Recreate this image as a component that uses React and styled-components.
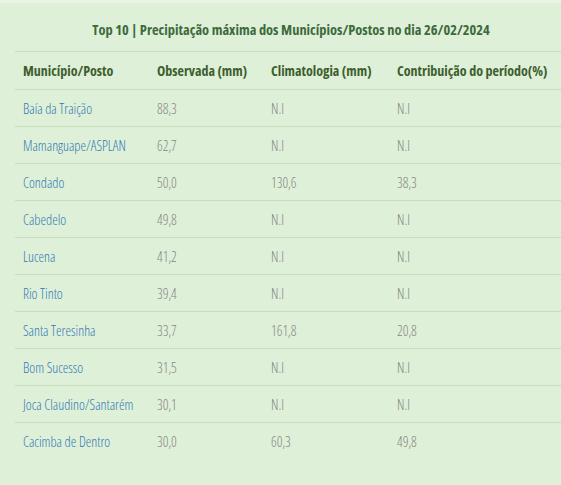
import React from "react";
import styled, { createGlobalStyle } from "styled-components";

const GlobalStyle = createGlobalStyle`
  html, body {
    margin: 0;
    padding: 0;
    background: #dff0d8;
  }
  body {
    font-family: "Open Sans", "Liberation Sans", sans-serif;
    font-stretch: 75%;
  }
`;

const rows = [
  ["Baía da Traição", "88,3", "N.I", "N.I"],
  ["Mamanguape/ASPLAN", "62,7", "N.I", "N.I"],
  ["Condado", "50,0", "130,6", "38,3"],
  ["Cabedelo", "49,8", "N.I", "N.I"],
  ["Lucena", "41,2", "N.I", "N.I"],
  ["Rio Tinto", "39,4", "N.I", "N.I"],
  ["Santa Teresinha", "33,7", "161,8", "20,8"],
  ["Bom Sucesso", "31,5", "N.I", "N.I"],
  ["Joca Claudino/Santarém", "30,1", "N.I", "N.I"],
  ["Cacimba de Dentro", "30,0", "60,3", "49,8"],
];

export default function App() {
  return (
    <>
      <GlobalStyle />
      <Panel>
        <Title>Top 10 | Precipitação máxima dos Municípios/Postos no dia 26/02/2024</Title>
        <Table>
          <colgroup>
            <col style={{ width: 134 }} />
            <col style={{ width: 114 }} />
            <col style={{ width: 126 }} />
            <col />
          </colgroup>
          <thead>
            <tr>
              <Head>Município/Posto</Head>
              <Head>Observada (mm)</Head>
              <Head>Climatologia (mm)</Head>
              <Head>Contribuição do período(%)</Head>
            </tr>
          </thead>
          <tbody>
            {rows.map((r) => (
              <Row key={r[0]}>
                <Cell>
                  <Place href="#">{r[0]}</Place>
                </Cell>
                <Cell>{r[1]}</Cell>
                <Cell>{r[2]}</Cell>
                <Cell>{r[3]}</Cell>
              </Row>
            ))}
          </tbody>
        </Table>
      </Panel>
    </>
  );
}

const Panel = styled.div`
  width: 561px;
  height: 485px;
  box-sizing: border-box;
  border-top: 3px solid #e9f4e4;
  padding: 0 0 0 15px;
  overflow: hidden;
`;

const Title = styled.div`
  height: 48px;
  line-height: 54px;
  text-align: center;
  padding-left: 6px;
  font-size: 14.4px;
  font-weight: 700;
  color: #3c6a3c;
  white-space: nowrap;
`;

const Table = styled.table`
  width: 546px;
  border-collapse: collapse;
  table-layout: fixed;
`;

const Head = styled.th`
  height: 37px;
  padding: 0 8px;
  text-align: left;
  font-size: 14px;
  font-weight: 700;
  color: #3d5e2e;
  border-top: 1px solid #c9dcc0;
  white-space: nowrap;
`;

const Row = styled.tr`
  border-top: 1px solid #c9dcc0;
`;

const Cell = styled.td`
  height: 36px;
  padding: 0 8px;
  font-size: 14px;
  font-weight: 300;
  color: #858585;
  white-space: nowrap;
`;

const Place = styled.a`
  color: #337ab7;
  text-decoration: none;
`;
